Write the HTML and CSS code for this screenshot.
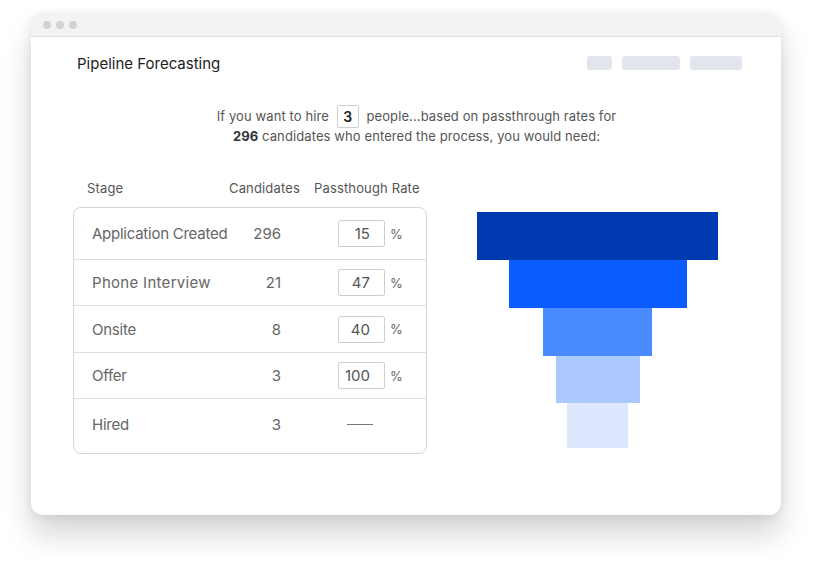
FILE: index.html
```html
<!DOCTYPE html>
<html>
<head>
<meta charset="utf-8">
<link rel="stylesheet" href="styles.css">
</head>
<body>
<div class="page">
  <div class="window">
    <div class="titlebar">
      <span class="dot"></span><span class="dot"></span><span class="dot"></span>
    </div>
    <div class="content">
      <div class="header">
        <div class="title">Pipeline Forecasting</div>
        <div class="placeholders">
          <span class="ph ph1"></span><span class="ph ph2"></span><span class="ph ph3"></span>
        </div>
      </div>
      <div class="sentence">
        <div class="line">If you want to hire <span class="hire-box">3</span> people...based on passthrough rates for</div>
        <div class="line"><b>296</b> candidates who entered the process, you would need:</div>
      </div>
      <div class="main">
        <div class="left">
          <div class="colheads">
            <span class="h-stage">Stage</span>
            <span class="h-cand">Candidates</span>
            <span class="h-rate">Passthough Rate</span>
          </div>
          <div class="table">
            <div class="row r1">
              <span class="label">Application Created</span>
              <span class="count">296</span>
              <span class="rate">15</span><span class="pct">%</span>
            </div>
            <div class="row r2">
              <span class="label label-wide">Phone Interview</span>
              <span class="count">21</span>
              <span class="rate">47</span><span class="pct">%</span>
            </div>
            <div class="row r3">
              <span class="label">Onsite</span>
              <span class="count">8</span>
              <span class="rate">40</span><span class="pct">%</span>
            </div>
            <div class="row r4">
              <span class="label">Offer</span>
              <span class="count">3</span>
              <span class="rate">100</span><span class="pct">%</span>
            </div>
            <div class="row r5">
              <span class="label">Hired</span>
              <span class="count">3</span>
              <span class="dash"></span>
            </div>
          </div>
        </div>
        <div class="funnel">
          <div class="bar b1" style="width:241px"></div>
          <div class="bar b2" style="width:178px"></div>
          <div class="bar b3" style="width:109px"></div>
          <div class="bar b4" style="width:84px"></div>
          <div class="bar b5" style="width:61px"></div>
        </div>
      </div>
    </div>
  </div>
</div>
</body>
</html>
```

FILE: styles.css
```css
* { box-sizing: border-box; }
html, body {
  margin: 0;
  padding: 0;
  background: #ffffff;
}
body {
  font-family: Inter, "Noto Sans", "Liberation Sans", sans-serif;
  color: #555;
  width: 814px;
  height: 566px;
  overflow: hidden;
}
.page {
  padding: 13px 33px 0 31px;
}
.window {
  width: 750px;
  height: 502px;
  border-radius: 12px;
  background: #fff;
  overflow: hidden;
  box-shadow: 0 20px 30px rgba(0, 0, 0, 0.16), 0 2px 10px rgba(0, 0, 0, 0.08);
}
.titlebar {
  height: 24px;
  background: #f3f3f4;
  border-bottom: 1px solid #e0e0e2;
  display: flex;
  align-items: center;
  gap: 5px;
  padding: 0 0 0 12px;
}
.dot {
  width: 8px;
  height: 8px;
  border-radius: 50%;
  background: #d2d2d5;
}
.content {
  padding: 0 39px 0 42px;
}
.header {
  display: flex;
  justify-content: space-between;
  align-items: center;
  height: 16px;
  margin-top: 18px;
  padding-left: 4px;
}
.title {
  font-size: 15px;
  color: #1c1c1e;
}
.placeholders {
  display: flex;
  gap: 10px;
}
.ph {
  height: 14px;
  border-radius: 3px;
  background: #e3e5ec;
}
.ph1 { width: 25px; }
.ph2 { width: 58px; }
.ph3 { width: 52px; }
.sentence {
  margin-top: 35px;
  padding-left: 18px;
  text-align: center;
  font-size: 13px;
  letter-spacing: 0.1px;
  color: #555;
}
.line {
  height: 20px;
  line-height: 20px;
}
.line b {
  color: #333;
  font-weight: 700;
}
.hire-box {
  display: inline-block;
  width: 22px;
  height: 23px;
  line-height: 21px;
  margin: -3px 4px -1px 4px;
  border: 1px solid #cfcfd2;
  border-radius: 2px;
  color: #222;
  font-weight: 600;
  font-size: 14px;
  vertical-align: middle;
}
.main {
  display: flex;
  margin-top: 34px;
}
.left {
  width: 354px;
}
.colheads {
  display: flex;
  font-size: 13px;
  letter-spacing: 0.15px;
  line-height: 16px;
  color: #555;
  padding-left: 14px;
  margin-bottom: 11px;
}
.h-stage { width: 142px; }
.h-cand { width: 85px; }
.table {
  border: 1px solid #d6d6d9;
  border-radius: 8px;
  font-size: 15px;
  color: #666;
}
.row {
  display: flex;
  align-items: center;
  padding-left: 18px;
  border-bottom: 1px solid #dcdcdf;
}
.row:last-child { border-bottom: none; }
.r1 { height: 52px; }
.r2 { height: 46px; }
.r3 { height: 47px; }
.r4 { height: 46px; }
.r5 { height: 54px; padding-bottom: 4px; }
.label {
  width: 150px;
  letter-spacing: -0.25px;
}
.label-wide { letter-spacing: 0.3px; }
.count {
  width: 39px;
  text-align: right;
}
.rate {
  margin-left: 57px;
  width: 47px;
  height: 27px;
  line-height: 25px;
  border: 1px solid #cfcfd2;
  border-radius: 2px;
  text-align: right;
  padding-right: 14px;
  color: #555;
}
.pct {
  margin-left: 5px;
  font-size: 13px;
  color: #666;
}
.dash {
  margin-left: 66px;
  width: 26px;
  height: 1px;
  background: #777;
}
.funnel {
  margin-left: 50px;
  width: 241px;
  padding-top: 32px;
  display: flex;
  flex-direction: column;
  align-items: center;
}
.bar { height: 48px; }
.b1 { background: #003ab0; }
.b2 { background: #0b5cff; }
.b3 { background: #4a8bff; }
.b4 { background: #abc8ff; height: 47px; }
.b5 { background: #dde8ff; height: 45px; }
```
